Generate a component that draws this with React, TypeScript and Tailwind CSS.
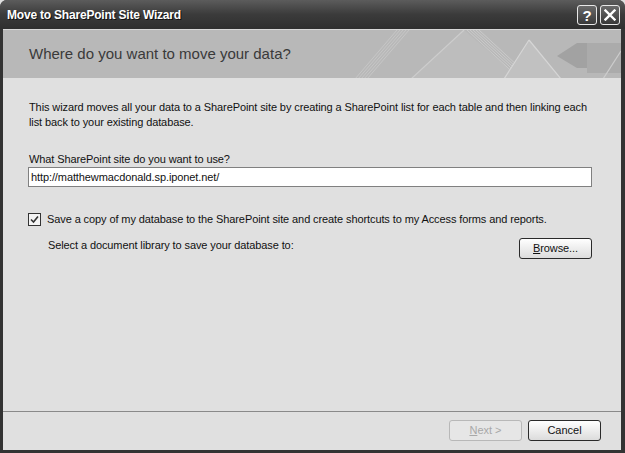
import React from 'react';

const ui = { fontFamily: '"Liberation Sans", Arial, sans-serif' };

function HeaderArt() {
  return (
    <svg className="absolute right-0 top-0" width="270" height="49" viewBox="0 0 270 49">
      {/* faint group on the left */}
      {[0, 3, 6, 9, 12].map(d => (
        <line key={'a' + d} x1={4 + d} y1={49} x2={46 + d} y2={0} stroke="#c6c6c6" strokeWidth="1" />
      ))}
      {/* big peak */}
      <polygon points="60,49 113,0 170,49" fill="#bdbdbd" />
      <line x1={60} y1={49} x2={113} y2={0} stroke="#cdcdcd" strokeWidth="1.2" />
      {[0, 3, 6, 9, 12].map(d => (
        <line key={'b' + d} x1={116 + d} y1={0} x2={169 + d} y2={49} stroke="#cacaca" strokeWidth="1" />
      ))}
      {/* small peak */}
      <polygon points="153,49 178,10 210,49" fill="#c1c1c1" />
      <line x1={153} y1={49} x2={178} y2={10} stroke="#d6d6d6" strokeWidth="1.2" />
      <line x1={178} y1={10} x2={210} y2={49} stroke="#d6d6d6" strokeWidth="1.2" />
      {/* dark arrow and square */}
      <polygon points="206,26 226,13 236,13 236,38 226,38" fill="#a2a2a2" />
      <rect x="236" y="13" width="34" height="30" fill="#ababab" />
      <line x1={252} y1={49} x2={270} y2={21} stroke="#cdcdcd" strokeWidth="1.2" />
    </svg>
  );
}

function Btn({ children, disabled }: { children: React.ReactNode; disabled?: boolean }) {
  return (
    <button
      className={
        disabled
          ? 'w-[73px] h-[21px] rounded-[3px] border border-[#b8b8b8] bg-[#e6e6e6] text-[#a8a8a8] text-[11px] leading-none'
          : 'w-[73px] h-[21px] rounded-[3px] border border-[#2a2a2a] bg-gradient-to-b from-[#ffffff] to-[#dcdcdc] text-[#111] text-[11px] leading-none'
      }
      style={ui}
    >
      {children}
    </button>
  );
}

export default function App() {
  return (
    <div className="w-[625px] h-[453px] bg-[#e0e0e0]" style={ui}>
      <div className="w-full h-full rounded-t-[7px] bg-[#333333] flex flex-col">
        {/* Title bar */}
        <div className="h-[29px] flex items-center justify-between pl-[7px] pr-[5px] rounded-t-[7px] bg-gradient-to-b from-[#5c5c5c] via-[#3b3b3b] to-[#2f2f2f]">
          <span className="text-white font-bold text-[12px] tracking-[-0.2px] [text-shadow:1px_1px_0_#111]">Move to SharePoint Site Wizard</span>
          <div className="flex gap-[3px] mt-[1px]">
            <div className="w-[20px] h-[20px] rounded-[3px] border border-[#e8e8e8] bg-gradient-to-b from-[#6a6a6a] to-[#3a3a3a] flex items-center justify-center text-white font-bold text-[15px] leading-none">?</div>
            <div className="w-[20px] h-[20px] rounded-[3px] border border-[#e8e8e8] bg-gradient-to-b from-[#6a6a6a] to-[#3a3a3a] flex items-center justify-center">
              <svg width="12" height="12" viewBox="0 0 12 12">
                <path d="M1.5 1.5 L10.5 10.5 M10.5 1.5 L1.5 10.5" stroke="#fff" strokeWidth="2.4" strokeLinecap="square" />
              </svg>
            </div>
          </div>
        </div>

        {/* Client area */}
        <div className="flex-1 ml-[3px] mr-[4px] mb-[3px] flex flex-col bg-[#e0e0e0]">
          <div className="relative h-[49px] bg-[#b8b8b8] border-t border-[#d8d8d8] flex items-center pl-[26px] pt-[1px] overflow-hidden">
            <HeaderArt />
            <span className="relative text-[15px] text-[#3a3a3a]">Where do you want to move your data?</span>
          </div>

          <div className="flex-1 flex flex-col pl-[26px] pr-[29px] pt-[22px] text-[11px] tracking-[-0.1px] text-[#111]">
            <p className="leading-[15px]">
              This wizard moves all your data to a SharePoint site by creating a SharePoint list for each table and then linking each list back to your existing database.
            </p>
            <p className="mt-[23px] leading-[13px]">What SharePoint site do you want to use?</p>
            <div className="mt-[1px] ml-[-1px] h-[20px] border border-[#808080] bg-white flex items-center px-[2px]">
              http://matthewmacdonald.sp.iponet.net/
            </div>
            <div className="mt-[24px] ml-[-1px] flex items-center gap-[6px]">
              <div className="w-[13px] h-[13px] border border-[#333] bg-[#f4f4f4] flex items-center justify-center">
                <svg width="9" height="9" viewBox="0 0 9 9">
                  <path d="M1 4.5 L3.5 7 L8 1.5" stroke="#333" strokeWidth="1.6" fill="none" />
                </svg>
              </div>
              <span>Save a copy of my database to the SharePoint site and create shortcuts to my Access forms and reports.</span>
            </div>
            <div className="mt-[10px] flex items-start justify-between pl-[19px]">
              <span className="leading-[13px] pt-[1px]">Select a document library to save your database to:</span>
              <Btn><span className="underline">B</span>rowse...</Btn>
            </div>
          </div>

          <div className="h-[39px] border-t border-[#8a8a8a] flex items-start justify-end gap-[6px] pt-[8px] pr-[20px]">
            <Btn disabled><span className="underline">N</span>ext &gt;</Btn>
            <Btn>Cancel</Btn>
          </div>
        </div>
      </div>
    </div>
  );
}
